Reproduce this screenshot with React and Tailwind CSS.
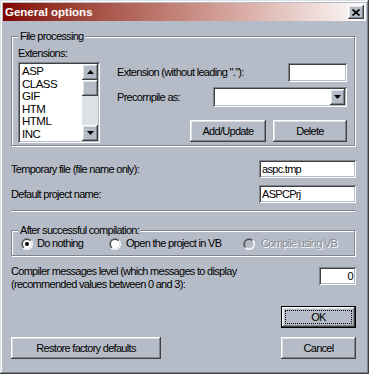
import React from "react";

const raised =
  "bg-[#b5bcc7] shadow-[inset_-1px_-1px_0_#404040,inset_1px_1px_0_#ffffff,inset_-2px_-2px_0_#7e8591,inset_2px_2px_0_#dde1e6]";
const sunken =
  "bg-white shadow-[inset_1px_1px_0_#7e8591,inset_-1px_-1px_0_#ffffff,inset_2px_2px_0_#404040,inset_-2px_-2px_0_#b5bcc7]";
const groupBox =
  "border border-[#7e8591] shadow-[1px_1px_0_#ffffff,inset_1px_1px_0_#ffffff]";
const legend = "-mt-[7px] ml-[6px] w-fit px-[2px] bg-[#b5bcc7] leading-[13px]";

function Arrow({ up }) {
  return (
    <svg width="7" height="4" viewBox="0 0 7 4">
      <polygon points={up ? "3.5,0 7,4 0,4" : "0,0 7,0 3.5,4"} fill="#000" />
    </svg>
  );
}

function Radio({ checked, disabled }) {
  return (
    <svg width="12" height="12" viewBox="0 0 12 12" className="shrink-0">
      <defs>
        <linearGradient id="ro" x1="0" y1="0" x2="1" y2="1">
          <stop offset="0.5" stopColor="#7e8591" />
          <stop offset="0.5" stopColor="#ffffff" />
        </linearGradient>
        <linearGradient id="ri" x1="0" y1="0" x2="1" y2="1">
          <stop offset="0.5" stopColor="#404040" />
          <stop offset="0.5" stopColor="#dde1e6" />
        </linearGradient>
      </defs>
      <circle cx="6" cy="6" r="6" fill="url(#ro)" />
      <circle cx="6" cy="6" r="5" fill="url(#ri)" />
      <circle cx="6" cy="6" r="4" fill={disabled ? "#b5bcc7" : "#ffffff"} />
      {checked && <circle cx="6" cy="6" r="2" fill="#000" />}
    </svg>
  );
}

function Button({ children, className }) {
  return (
    <div className={"flex h-[22px] items-center justify-center " + raised + " " + className}>
      {children}
    </div>
  );
}

export default function App() {
  const items = ["ASP", "CLASS", "GIF", "HTM", "HTML", "INC"];

  return (
    <div className="w-[369px] h-[374px] bg-[#b5bcc7] p-[3px] font-['Liberation_Sans',Arial,sans-serif] text-[11px] leading-[13px] tracking-[-0.7px] text-black shadow-[inset_-1px_-1px_0_#404040,inset_1px_1px_0_#dde1e6,inset_-2px_-2px_0_#7e8591,inset_2px_2px_0_#ffffff]">
      <div className="flex h-[18px] items-center justify-between bg-linear-to-r from-[#800000] to-[#fdfcfc] pl-[2px]">
        <span className="text-[11.5px] font-bold tracking-normal text-white">General options</span>
        <div className={"mr-[2px] flex h-[14px] w-[16px] items-center justify-center " + raised}>
          <svg width="8" height="7" viewBox="0 0 8 7">
            <path d="M0.5 0.5 L7.5 6.5 M7.5 0.5 L0.5 6.5" stroke="#000" strokeWidth="1.7" />
          </svg>
        </div>
      </div>

      <div className="ml-[8px] w-[345px]">
        {/* file processing */}
        <div className={"mt-[15px] w-[344px] " + groupBox}>
          <div className={legend}>File processing</div>
          <div className="flex pl-[6px] pr-[7px] pt-[4px] pb-[2px]">
            <div className="w-[82px]">
              <div>Extensions:</div>
              <div className={"mt-[2px] flex h-[81px] p-[2px] " + sunken}>
                <div className="flex-1 overflow-hidden pl-[2px] pt-[1px] text-[11.5px] leading-[12.6px] tracking-[-0.5px]">
                  {items.map((it) => (
                    <div key={it}>{it}</div>
                  ))}
                </div>
                <div className="flex w-[16px] flex-col bg-[#dde1e6]">
                  <div className={"flex h-[16px] items-center justify-center " + raised}>
                    <Arrow up />
                  </div>
                  <div className={"h-[16px] " + raised}></div>
                  <div className="flex-1"></div>
                  <div className={"flex h-[16px] items-center justify-center " + raised}>
                    <Arrow />
                  </div>
                </div>
              </div>
            </div>
            <div className="ml-[17px] flex-1 pt-[16px]">
              <div className="flex items-center justify-between">
                <span>Extension (without leading "."):</span>
                <div className={"h-[19px] w-[59px] " + sunken}></div>
              </div>
              <div className="mt-[5px] flex items-center justify-between">
                <span>Precompile as:</span>
                <div className={"flex h-[20px] w-[134px] justify-end p-[2px] " + sunken}>
                  <div className={"flex w-[15px] items-center justify-center " + raised}>
                    <Arrow />
                  </div>
                </div>
              </div>
              <div className="mt-[13px] flex justify-end gap-[7px]">
                <Button className="h-[21px] w-[76px]">Add/Update</Button>
                <Button className="h-[21px] w-[74px]">Delete</Button>
              </div>
            </div>
          </div>
        </div>

        <div className="mt-[14px] flex items-center justify-between">
          <span>Temporary file (file name only):</span>
          <div className={"flex h-[18px] w-[97px] items-center pl-[3px] " + sunken}>aspc.tmp</div>
        </div>
        <div className="mt-[7px] flex items-center justify-between">
          <span>Default project name:</span>
          <div className={"flex h-[18px] w-[97px] items-center pl-[3px] " + sunken}>ASPCPrj</div>
        </div>

        <div className="mt-[7px] h-px w-[344px] bg-[#7e8591] shadow-[0_1px_0_#ffffff]"></div>

        {/* after compilation */}
        <div className={"mt-[19px] w-[344px] " + groupBox}>
          <div className={legend}>After successful compilation:</div>
          <div className="flex items-center pl-[9px] pb-[5px]">
            <div className="flex w-[88px] items-center gap-[4px]">
              <Radio checked />
              <span>Do nothing</span>
            </div>
            <div className="flex w-[134px] items-center gap-[5px]">
              <Radio />
              <span>Open the project in VB</span>
            </div>
            <div className="flex items-center gap-[6px]">
              <Radio disabled />
              <span className="text-[#868d98] [text-shadow:1px_1px_0_#ffffff]">Compile using VB</span>
            </div>
          </div>
        </div>

        <div className="mt-[9px] flex items-start justify-between">
          <span>
            Compiler messages level (which messages to display
            <br />
            (recommended values between 0 and 3):
          </span>
          <div className={"mt-[2px] flex h-[18px] w-[37px] items-center justify-end pr-[3px] " + sunken}>0</div>
        </div>

        <div className="mt-[15px] flex justify-end">
          <div className={"flex h-[22px] w-[75px] border border-black p-[3px] " + raised}>
            <div className="flex flex-1 items-center justify-center border border-dotted border-black">OK</div>
          </div>
        </div>

        <div className="mt-[9px] flex justify-between">
          <Button className="w-[150px]">Restore factory defaults</Button>
          <Button className="w-[75px]">Cancel</Button>
        </div>
      </div>
    </div>
  );
}
